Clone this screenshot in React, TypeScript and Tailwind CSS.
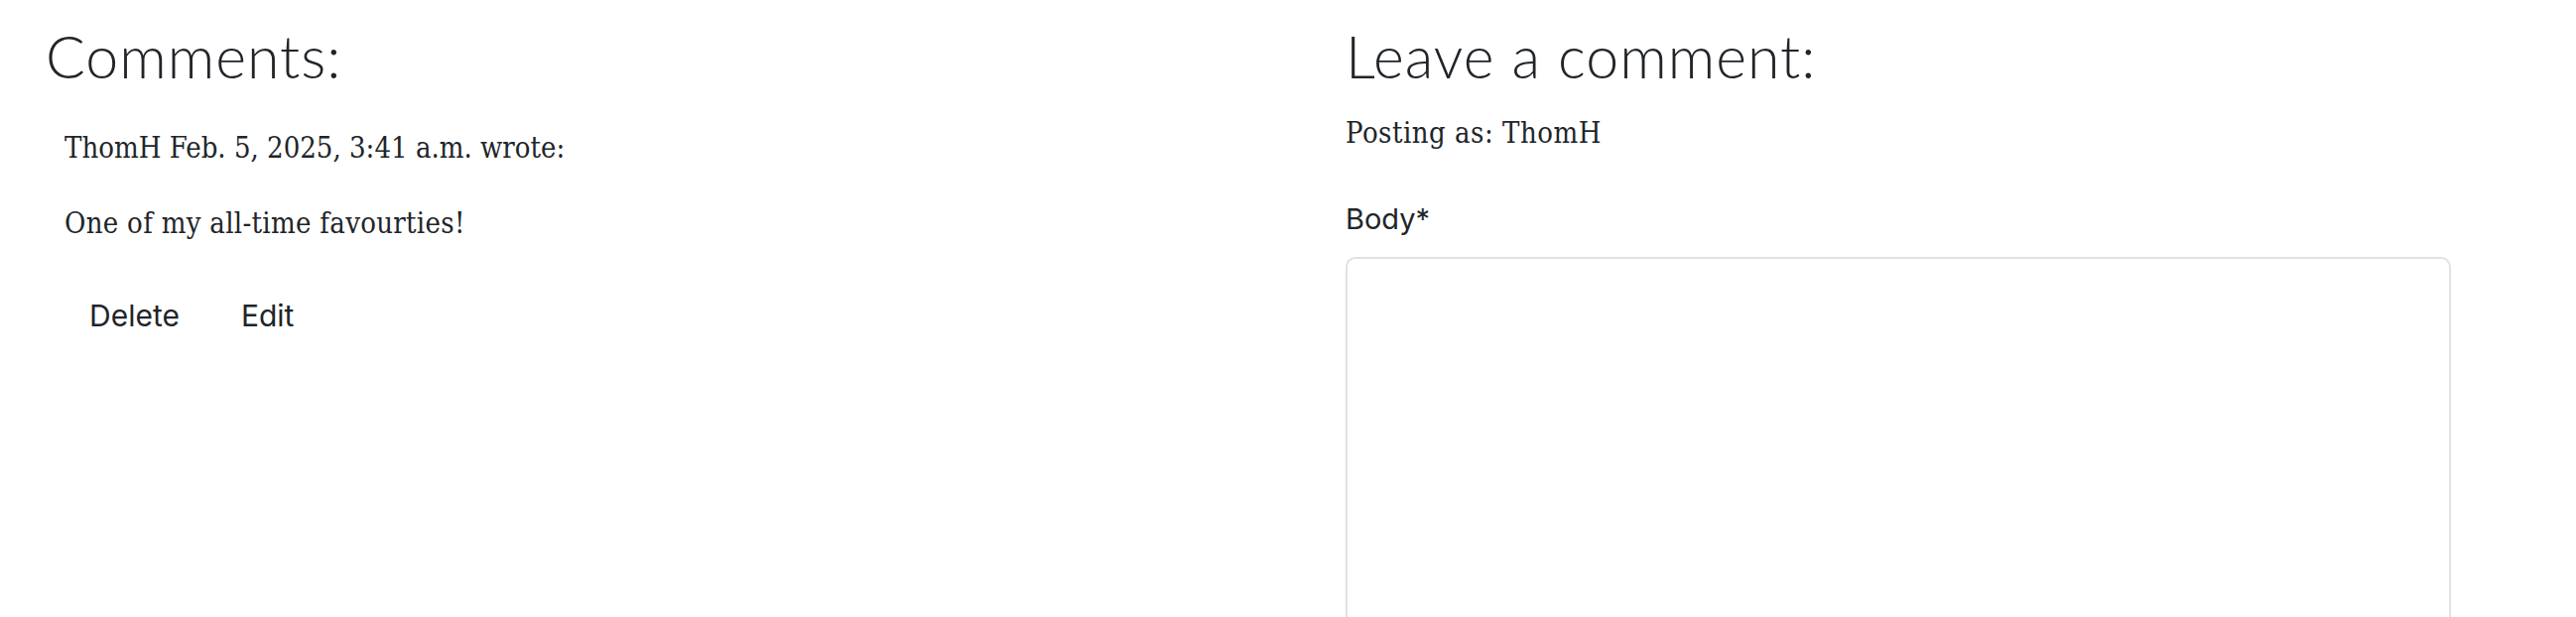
export default function App() {
  const heading = "font-['Lato','Inter',sans-serif] font-light text-[59px] leading-[70px] tracking-[1px] text-[#212529]"
  const slab = "font-['DejaVu_Serif_Condensed','DejaVu_Serif',serif] text-[29px] leading-[40px] text-[#212529]"
  const ui = "font-['Inter','Roboto',sans-serif] text-[#212529]"

  return (
    <div className="flex h-[622px] w-[2596px] overflow-hidden bg-white">
      {/* comments list */}
      <section className="w-[1356px] flex-none pl-[46px] pt-[22px]">
        <h2 className={heading}>Comments:</h2>
        <div className="pl-[19px] pt-[37px]">
          <p className={slab}>ThomH Feb. 5, 2025, 3:41 a.m. wrote:</p>
          <p className={`${slab} mt-[36px] tracking-[0.3px]`}>One of my all-time favourties!</p>
          <div className="mt-[40px] flex gap-[18px] pl-[3px]">
            <button className={`${ui} rounded-[10px] px-[22px] py-[11px] text-[30px] leading-[45px]`}>Delete</button>
            <button className={`${ui} rounded-[10px] px-[22px] py-[11px] text-[30px] leading-[45px]`}>Edit</button>
          </div>
        </div>
      </section>

      {/* comment form */}
      <section className="w-[1114px] flex-none pt-[22px]">
        <h2 className={heading}>Leave a comment:</h2>
        <p className={`${slab} mt-[22px] tracking-[0.5px]`}>Posting as: ThomH</p>
        <form className="mt-[45px]">
          <label className={`${ui} block text-[29px] leading-[44px]`}>Body*</label>
          <textarea className="mt-[16px] block h-[420px] w-[1114px] resize-none rounded-[10px] border-2 border-[#dee2e6] bg-white" />
        </form>
      </section>
    </div>
  )
}
